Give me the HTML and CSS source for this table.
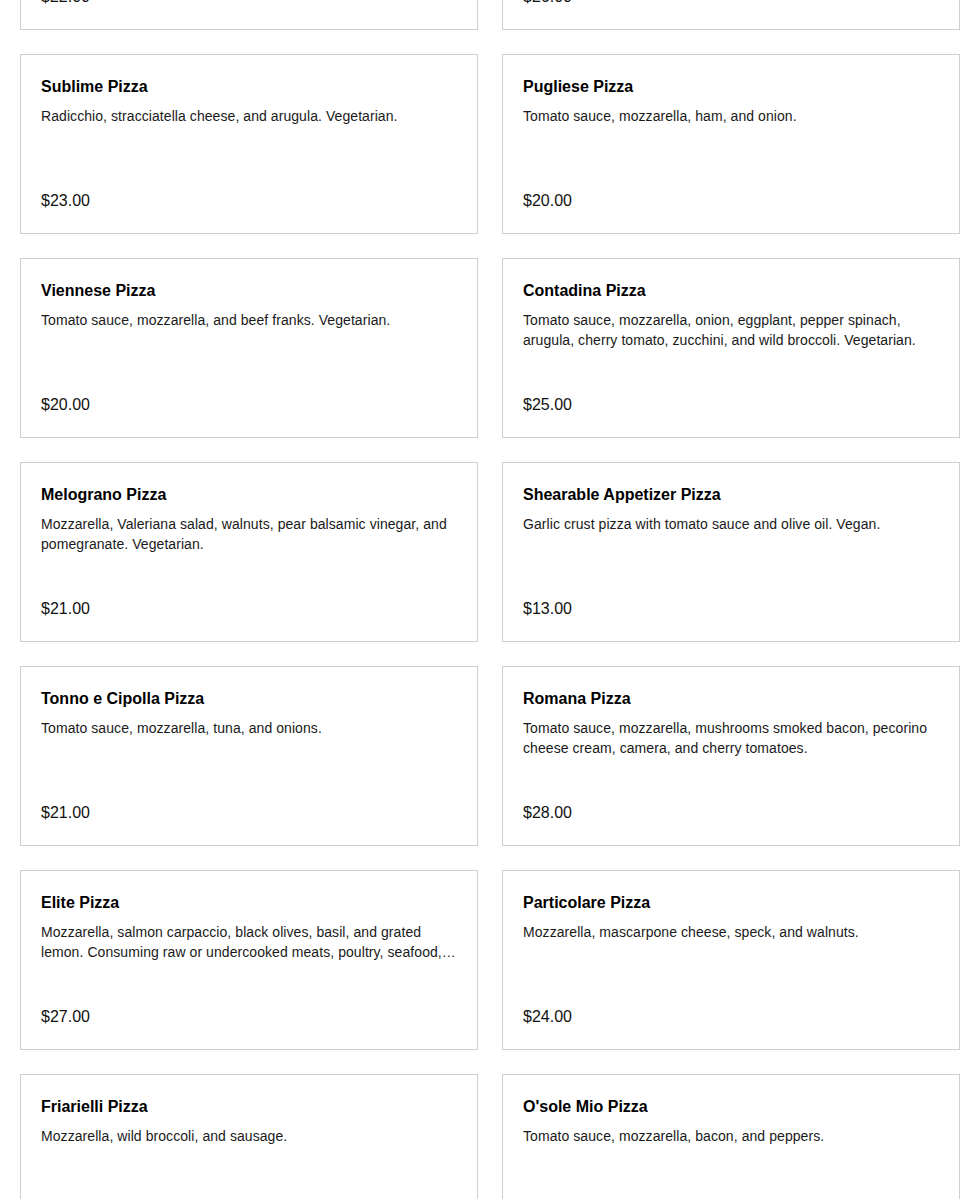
FILE: index.html
```html
<!DOCTYPE html>
<html lang="en">
<head>
<meta charset="utf-8">
<title>Pizza Menu</title>
<link rel="stylesheet" href="styles.css">
</head>
<body>
<main class="menu">
  <div class="card"><h3 class="title">Margherita Pizza</h3><p class="desc">Tomato sauce, mozzarella, and basil. Vegetarian.</p><div class="price">$22.00</div></div>
  <div class="card"><h3 class="title">Diavola Pizza</h3><p class="desc">Tomato sauce, mozzarella, and spicy salami.</p><div class="price">$26.00</div></div>

  <div class="card"><h3 class="title">Sublime Pizza</h3><p class="desc">Radicchio, stracciatella cheese, and arugula. Vegetarian.</p><div class="price">$23.00</div></div>
  <div class="card"><h3 class="title">Pugliese Pizza</h3><p class="desc">Tomato sauce, mozzarella, ham, and onion.</p><div class="price">$20.00</div></div>

  <div class="card"><h3 class="title">Viennese Pizza</h3><p class="desc">Tomato sauce, mozzarella, and beef franks. Vegetarian.</p><div class="price">$20.00</div></div>
  <div class="card"><h3 class="title">Contadina Pizza</h3><p class="desc">Tomato sauce, mozzarella, onion, eggplant, pepper spinach, arugula, cherry tomato, zucchini, and wild broccoli. Vegetarian.</p><div class="price">$25.00</div></div>

  <div class="card"><h3 class="title">Melograno Pizza</h3><p class="desc">Mozzarella, Valeriana salad, walnuts, pear balsamic vinegar, and pomegranate. Vegetarian.</p><div class="price">$21.00</div></div>
  <div class="card"><h3 class="title">Shearable Appetizer Pizza</h3><p class="desc">Garlic crust pizza with tomato sauce and olive oil. Vegan.</p><div class="price">$13.00</div></div>

  <div class="card"><h3 class="title">Tonno e Cipolla Pizza</h3><p class="desc">Tomato sauce, mozzarella, tuna, and onions.</p><div class="price">$21.00</div></div>
  <div class="card"><h3 class="title">Romana Pizza</h3><p class="desc">Tomato sauce, mozzarella, mushrooms smoked bacon, pecorino cheese cream, camera, and cherry tomatoes.</p><div class="price">$28.00</div></div>

  <div class="card"><h3 class="title">Elite Pizza</h3><p class="desc">Mozzarella, salmon carpaccio, black olives, basil, and grated lemon. Consuming raw or undercooked meats, poultry, seafood, shellfish, or eggs may increase your risk of foodborne illness.</p><div class="price">$27.00</div></div>
  <div class="card"><h3 class="title">Particolare Pizza</h3><p class="desc">Mozzarella, mascarpone cheese, speck, and walnuts.</p><div class="price">$24.00</div></div>

  <div class="card"><h3 class="title">Friarielli Pizza</h3><p class="desc">Mozzarella, wild broccoli, and sausage.</p><div class="price">$22.00</div></div>
  <div class="card"><h3 class="title">O'sole Mio Pizza</h3><p class="desc">Tomato sauce, mozzarella, bacon, and peppers.</p><div class="price">$22.00</div></div>
</main>
</body>
</html>
```

FILE: styles.css
```css
html, body {
  margin: 0;
  padding: 0;
  background: #ffffff;
  overflow: hidden;
}

body {
  font-family: "Liberation Sans", Arial, sans-serif;
  color: #111111;
}

.menu {
  display: grid;
  grid-template-columns: repeat(2, 458px);
  grid-auto-rows: 180px;
  gap: 24px;
  padding: 0 5px 0 20px;
  margin-top: -150px;
}

.card {
  box-sizing: border-box;
  border: 1px solid #cfcfcf;
  padding: 21px 20px 20px;
  display: flex;
  flex-direction: column;
  background: #ffffff;
}

.title {
  margin: 0 0 8px;
  font-size: 16px;
  line-height: 22px;
  font-weight: 700;
  color: #000000;
}

.desc {
  margin: 0;
  font-size: 14px;
  line-height: 20px;
  letter-spacing: 0.07px;
  color: #1a1a1a;
  display: -webkit-box;
  -webkit-box-orient: vertical;
  -webkit-line-clamp: 2;
  overflow: hidden;
}

.price {
  margin-top: auto;
  font-size: 16px;
  line-height: 24px;
  color: #111111;
}
```
